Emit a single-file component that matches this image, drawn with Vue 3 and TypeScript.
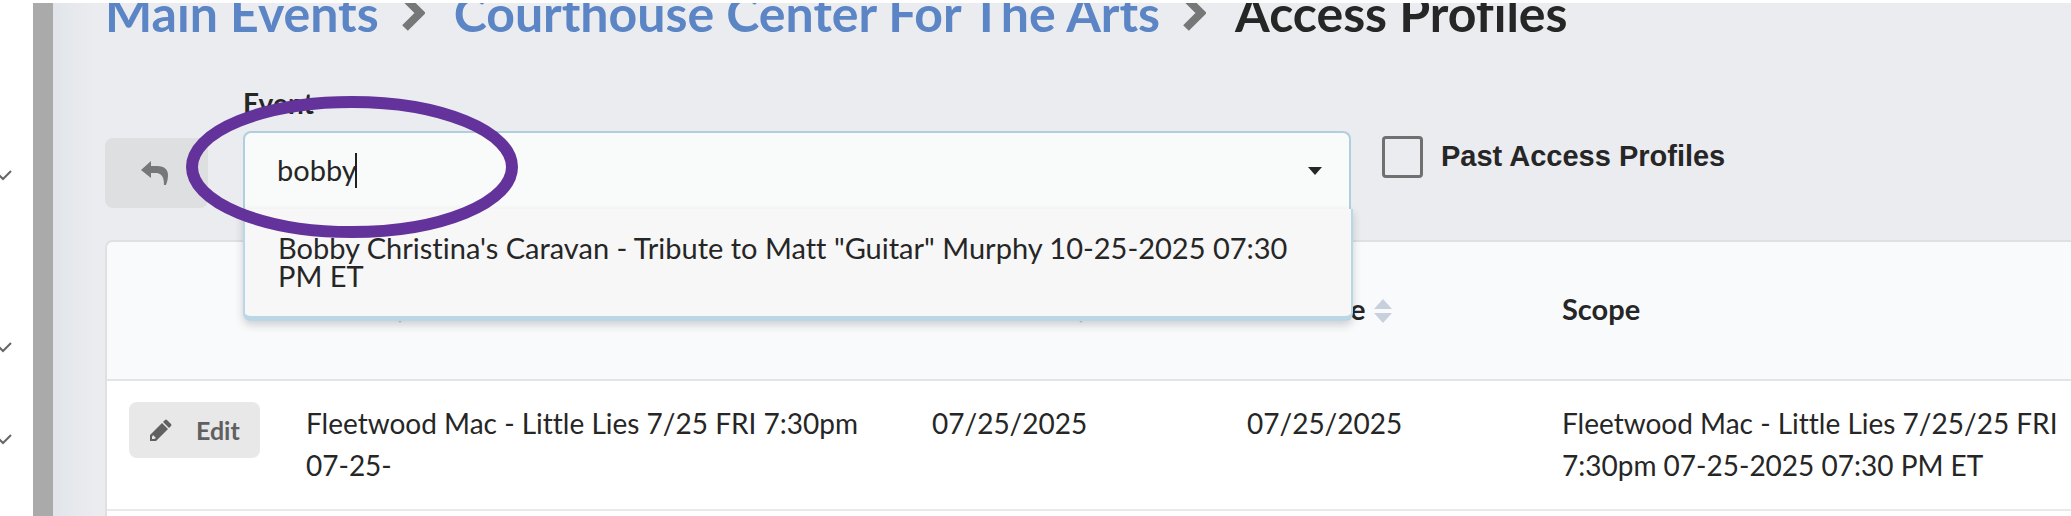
<script setup lang="ts">
import { ref } from 'vue'

interface Crumb { label: string; href: string }
interface Column { label: string; sortable: boolean }
interface Profile { name: string; start: string; end: string; scope: string }

const crumbs: Crumb[] = [
  { label: 'Main Events', href: '#events' },
  { label: 'Courthouse Center For The Arts', href: '#venue' },
]

const columns: Column[] = [
  { label: '', sortable: false },
  { label: 'Name', sortable: true },
  { label: 'Start Date', sortable: true },
  { label: 'End Date', sortable: true },
  { label: 'Scope', sortable: false },
]

const profiles: Profile[] = [
  {
    name: 'Fleetwood Mac - Little Lies 7/25 FRI 7:30pm 07-25-',
    start: '07/25/2025',
    end: '07/25/2025',
    scope: 'Fleetwood Mac - Little Lies 7/25/25 FRI 7:30pm 07-25-2025 07:30 PM ET',
  },
]

const options: string[] = [
  'Bobby Christina\'s Caravan - Tribute to Matt "Guitar" Murphy 10-25-2025 07:30 PM ET',
]

const search = ref('bobby')
const showPast = ref(false)
</script>

<template>
  <div class="shell">
    <nav class="sidebar" aria-label="Sections">
      <button v-for="n in 3" :key="n" class="toggle" type="button" :aria-label="`Expand section ${n}`">
        <svg viewBox="0 0 18 12" width="18" height="12"><path d="M1 2l8 8 8-8" /></svg>
      </button>
    </nav>
    <div class="divider"></div>

    <main class="main">
      <h1 class="crumbs">
        <template v-for="c in crumbs" :key="c.label">
          <a :href="c.href">{{ c.label }}</a>
          <svg class="chevron" viewBox="0 0 24 36" width="24" height="36"><path d="M4 3l15 15L4 33" /></svg>
        </template>
        <span>Access Profiles</span>
      </h1>

      <div class="filters">
        <button class="back" type="button" aria-label="Back">
          <svg viewBox="0 0 28 24" width="28" height="24">
            <path d="M0 9L10 0v5h6c8 0 11 4 11 9 0 4-1 7-2 10h-2c0-8-2-11-7-12h-6v5z" />
          </svg>
        </button>

        <div class="field">
          <label for="event">Event</label>
          <div class="combo">
            <input id="event" v-model="search" type="text" role="combobox" aria-expanded="true" aria-controls="event-options" autocomplete="off" />
            <i class="caret"></i>
            <svg class="arrow" viewBox="0 0 14 8" width="14" height="8"><path d="M0 0h14L7 8z" /></svg>
            <ul id="event-options" class="menu" role="listbox">
              <li v-for="o in options" :key="o" role="option">{{ o }}</li>
            </ul>
            <svg class="marker" viewBox="0 0 332 144" width="332" height="144" aria-hidden="true">
              <ellipse cx="166" cy="72" rx="160" ry="65" />
            </svg>
          </div>
        </div>

        <label class="past">
          <input v-model="showPast" type="checkbox" />
          <span>Past Access Profiles</span>
        </label>
      </div>

      <div class="card">
        <table>
          <colgroup>
            <col class="c-action" /><col class="c-name" /><col class="c-date" /><col class="c-date" /><col />
          </colgroup>
          <thead>
            <tr>
              <th v-for="(c, i) in columns" :key="i" scope="col">
                {{ c.label }}
                <svg v-if="c.sortable" class="sort" viewBox="0 0 18 24" width="18" height="24">
                  <path d="M0 10L9 0l9 10zM0 14h18L9 24z" />
                </svg>
              </th>
            </tr>
          </thead>
          <tbody>
            <tr v-for="p in profiles" :key="p.name">
              <td>
                <button class="edit" type="button">
                  <svg viewBox="0 0 22 22" width="22" height="22">
                    <path d="M15 1q1-1 2 0l4 4q1 1 0 2l-2 2-6-6z" />
                    <path fill-rule="evenodd" d="M12 4l6 6L6 22H0v-6zM3 16l-1 2v2h2l2-1z" />
                  </svg>
                  Edit
                </button>
              </td>
              <td class="name">{{ p.name }}</td>
              <td>{{ p.start }}</td>
              <td>{{ p.end }}</td>
              <td>{{ p.scope }}</td>
            </tr>
          </tbody>
        </table>
      </div>
    </main>
  </div>
</template>

<style>
body {
  margin: 0;
  background: #fff;
}
</style>

<style scoped>
* {
  box-sizing: border-box;
}
.shell {
  display: flex;
  height: 100vh;
  overflow: hidden;
  border-top: 3px solid #fff;
  font-family: Lato, "Liberation Sans", sans-serif;
  font-size: 29px;
  line-height: 42px;
  font-variant-ligatures: none;
  color: #262626;
}
button {
  border: 0;
  font-family: inherit;
}
.sidebar {
  flex: 0 0 33px;
  display: flex;
  flex-direction: column;
  align-items: flex-start;
  padding-top: 126px;
  background: #fff;
}
.toggle {
  width: 20px;
  height: 92px;
  margin-left: -6px;
  padding: 0;
  background: none;
  display: flex;
  align-items: center;
}
.toggle:first-child {
  margin-bottom: 80px;
}
.toggle svg {
  fill: none;
  stroke: #666;
  stroke-width: 2;
}
.divider {
  flex: 0 0 20px;
  background: #aaa;
}
.main {
  flex: 1;
  min-width: 0;
  display: flex;
  flex-direction: column;
  padding-left: 52px;
  background: linear-gradient(90deg, #e1e5e9, #ebecf0 42px);
}
.crumbs {
  flex: none;
  display: flex;
  align-items: center;
  margin: -20px 0 0;
  font-size: 50px;
  line-height: 60px;
  font-weight: 700;
  white-space: nowrap;
}
.crumbs a {
  color: #5c85c5;
  text-decoration: none;
}
.chevron {
  margin: 0 29px 0 22px;
  fill: none;
  stroke: #777;
  stroke-width: 8;
}
.filters {
  flex: none;
  display: flex;
  align-items: flex-start;
  height: 197px;
  padding-top: 42px;
}
.back {
  flex: none;
  width: 103px;
  height: 70px;
  margin: 53px 35px 0 0;
  padding: 0 0 0 36px;
  border-radius: 8px;
  background: #dedfe0;
  display: flex;
  align-items: center;
}
.back svg {
  fill: #777;
}
.field {
  flex: 0 1 1108px;
  min-width: 0;
}
.field label {
  display: block;
  font-size: 28px;
  line-height: 36px;
  padding-bottom: 10px;
  font-weight: 700;
}
.combo {
  position: relative;
}
.combo input {
  display: block;
  width: 100%;
  height: 80px;
  padding: 0 80px 6px 32px;
  border: 2px solid #b0cfdd;
  border-bottom: 0;
  border-radius: 8px 8px 0 0;
  outline: 0;
  background: #f9fbfb;
  font: inherit;
  color: inherit;
}
.caret {
  position: absolute;
  left: 112px;
  top: 22px;
  width: 2px;
  height: 35px;
  background: #222;
}
.arrow {
  position: absolute;
  right: 29px;
  top: 36px;
  fill: #262626;
}
.menu {
  position: absolute;
  left: 0;
  right: -2px;
  top: 78px;
  z-index: 1;
  margin: 0;
  padding: 0;
  list-style: none;
  border: solid #b9d7e5;
  border-width: 0 2px 5px;
  border-radius: 0 0 8px 8px;
  background: #f7f7f7;
  box-shadow: 0 4px 8px rgba(34, 36, 38, 0.2);
}
.menu li {
  padding: 25px 33px 26px;
  line-height: 28px;
}
.marker {
  position: absolute;
  left: -57px;
  top: -36px;
  z-index: 2;
  pointer-events: none;
  fill: none;
  stroke: #63339b;
  stroke-width: 12;
}
.past {
  display: flex;
  align-items: center;
  gap: 18px;
  margin: 51px 0 0 31px;
  font-family: "Liberation Sans", Arial, sans-serif;
  font-weight: 700;
  white-space: nowrap;
}
.past span {
  padding-bottom: 2px;
  line-height: 40px;
}
.past input {
  appearance: none;
  flex: none;
  width: 41px;
  height: 42px;
  margin: 0;
  border: 3px solid #707070;
  border-radius: 4px;
}
.past input:checked {
  background: #707070;
}
.card {
  flex: 1;
  border: 2px solid #dfe0e2;
  border-width: 2px 0 0 2px;
  border-radius: 8px 0 0 0;
  overflow: hidden;
  background: #fff;
}
table {
  width: calc(100% + 16px);
  table-layout: fixed;
  border-collapse: collapse;
}
.c-action {
  width: 177px;
}
.c-name {
  width: 626px;
}
.c-date {
  width: 315px;
}
th {
  height: 138px;
  padding: 0 0 4px 22px;
  background: #f9fafc;
  border-bottom: 2px solid #e3e4e5;
  text-align: left;
  font-weight: 700;
}
.sort {
  margin-left: 1px;
  vertical-align: -3px;
  fill: #c8d0de;
}
td {
  padding: 21px 0 23px 22px;
  border-bottom: 2px solid #e9e9ea;
  vertical-align: top;
  font-size: 28px;
}
.name {
  padding-right: 22px;
}
.edit {
  display: flex;
  align-items: center;
  gap: 24px;
  width: 131px;
  height: 56px;
  padding: 0 0 0 21px;
  border-radius: 8px;
  background: #e8e8e8;
  color: #606060;
  font-size: 25px;
  font-weight: 700;
}
.edit svg {
  flex: none;
  fill: #606060;
}
</style>
